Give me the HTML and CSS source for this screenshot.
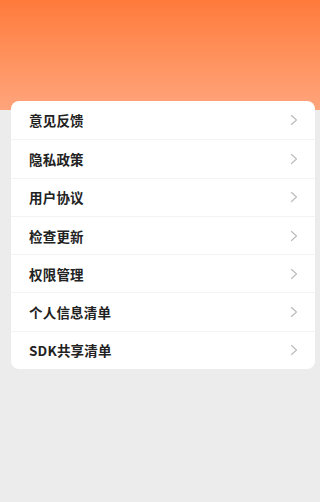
FILE: index.html
```html
<!DOCTYPE html>
<html lang="zh">
<head>
<meta charset="utf-8">
<link rel="stylesheet" href="styles.css">
</head>
<body>
<div class="page">
  <div class="header"></div>
  <ul class="card">
    <li class="row"><span class="label">意见反馈</span><svg class="chev" viewBox="0 0 8 12"><path d="M1.5 1.5 L6.5 6 L1.5 10.5"/></svg></li>
    <li class="row"><span class="label">隐私政策</span><svg class="chev" viewBox="0 0 8 12"><path d="M1.5 1.5 L6.5 6 L1.5 10.5"/></svg></li>
    <li class="row"><span class="label">用户协议</span><svg class="chev" viewBox="0 0 8 12"><path d="M1.5 1.5 L6.5 6 L1.5 10.5"/></svg></li>
    <li class="row"><span class="label">检查更新</span><svg class="chev" viewBox="0 0 8 12"><path d="M1.5 1.5 L6.5 6 L1.5 10.5"/></svg></li>
    <li class="row"><span class="label">权限管理</span><svg class="chev" viewBox="0 0 8 12"><path d="M1.5 1.5 L6.5 6 L1.5 10.5"/></svg></li>
    <li class="row"><span class="label">个人信息清单</span><svg class="chev" viewBox="0 0 8 12"><path d="M1.5 1.5 L6.5 6 L1.5 10.5"/></svg></li>
    <li class="row"><span class="label">SDK共享清单</span><svg class="chev" viewBox="0 0 8 12"><path d="M1.5 1.5 L6.5 6 L1.5 10.5"/></svg></li>
  </ul>
</div>
</body>
</html>
```
FILE: styles.css
```css
html, body {
  margin: 0;
  padding: 0;
  background: #ececec;
}
body {
  font-family: "Noto Sans CJK SC", "Noto Sans", sans-serif;
}
.page {
  width: 320px;
  height: 502px;
  background: #ececec;
  overflow: hidden;
}
.header {
  height: 110px;
  background: linear-gradient(180deg, #ff7a3b 0%, #ff915c 50%, #ffa47c 100%);
}
.card {
  list-style: none;
  margin: -9px 5px 0 11px;
  padding: 0;
  background: #ffffff;
  border-radius: 8px;
  overflow: hidden;
  position: relative;
}
.row {
  height: 38.3px;
  display: flex;
  align-items: center;
  justify-content: space-between;
  padding: 0 17px 0 18px;
  border-top: 1px solid #f3f3f3;
  box-sizing: border-box;
}
.row:first-child {
  border-top: none;
}
.label {
  font-size: 13.5px;
  font-weight: 700;
  color: #222222;
  letter-spacing: 0.2px;
}
.chev {
  width: 8px;
  height: 12px;
  fill: none;
  stroke: #bdbdbd;
  stroke-width: 1.2;
  stroke-linecap: round;
  stroke-linejoin: round;
}
```
